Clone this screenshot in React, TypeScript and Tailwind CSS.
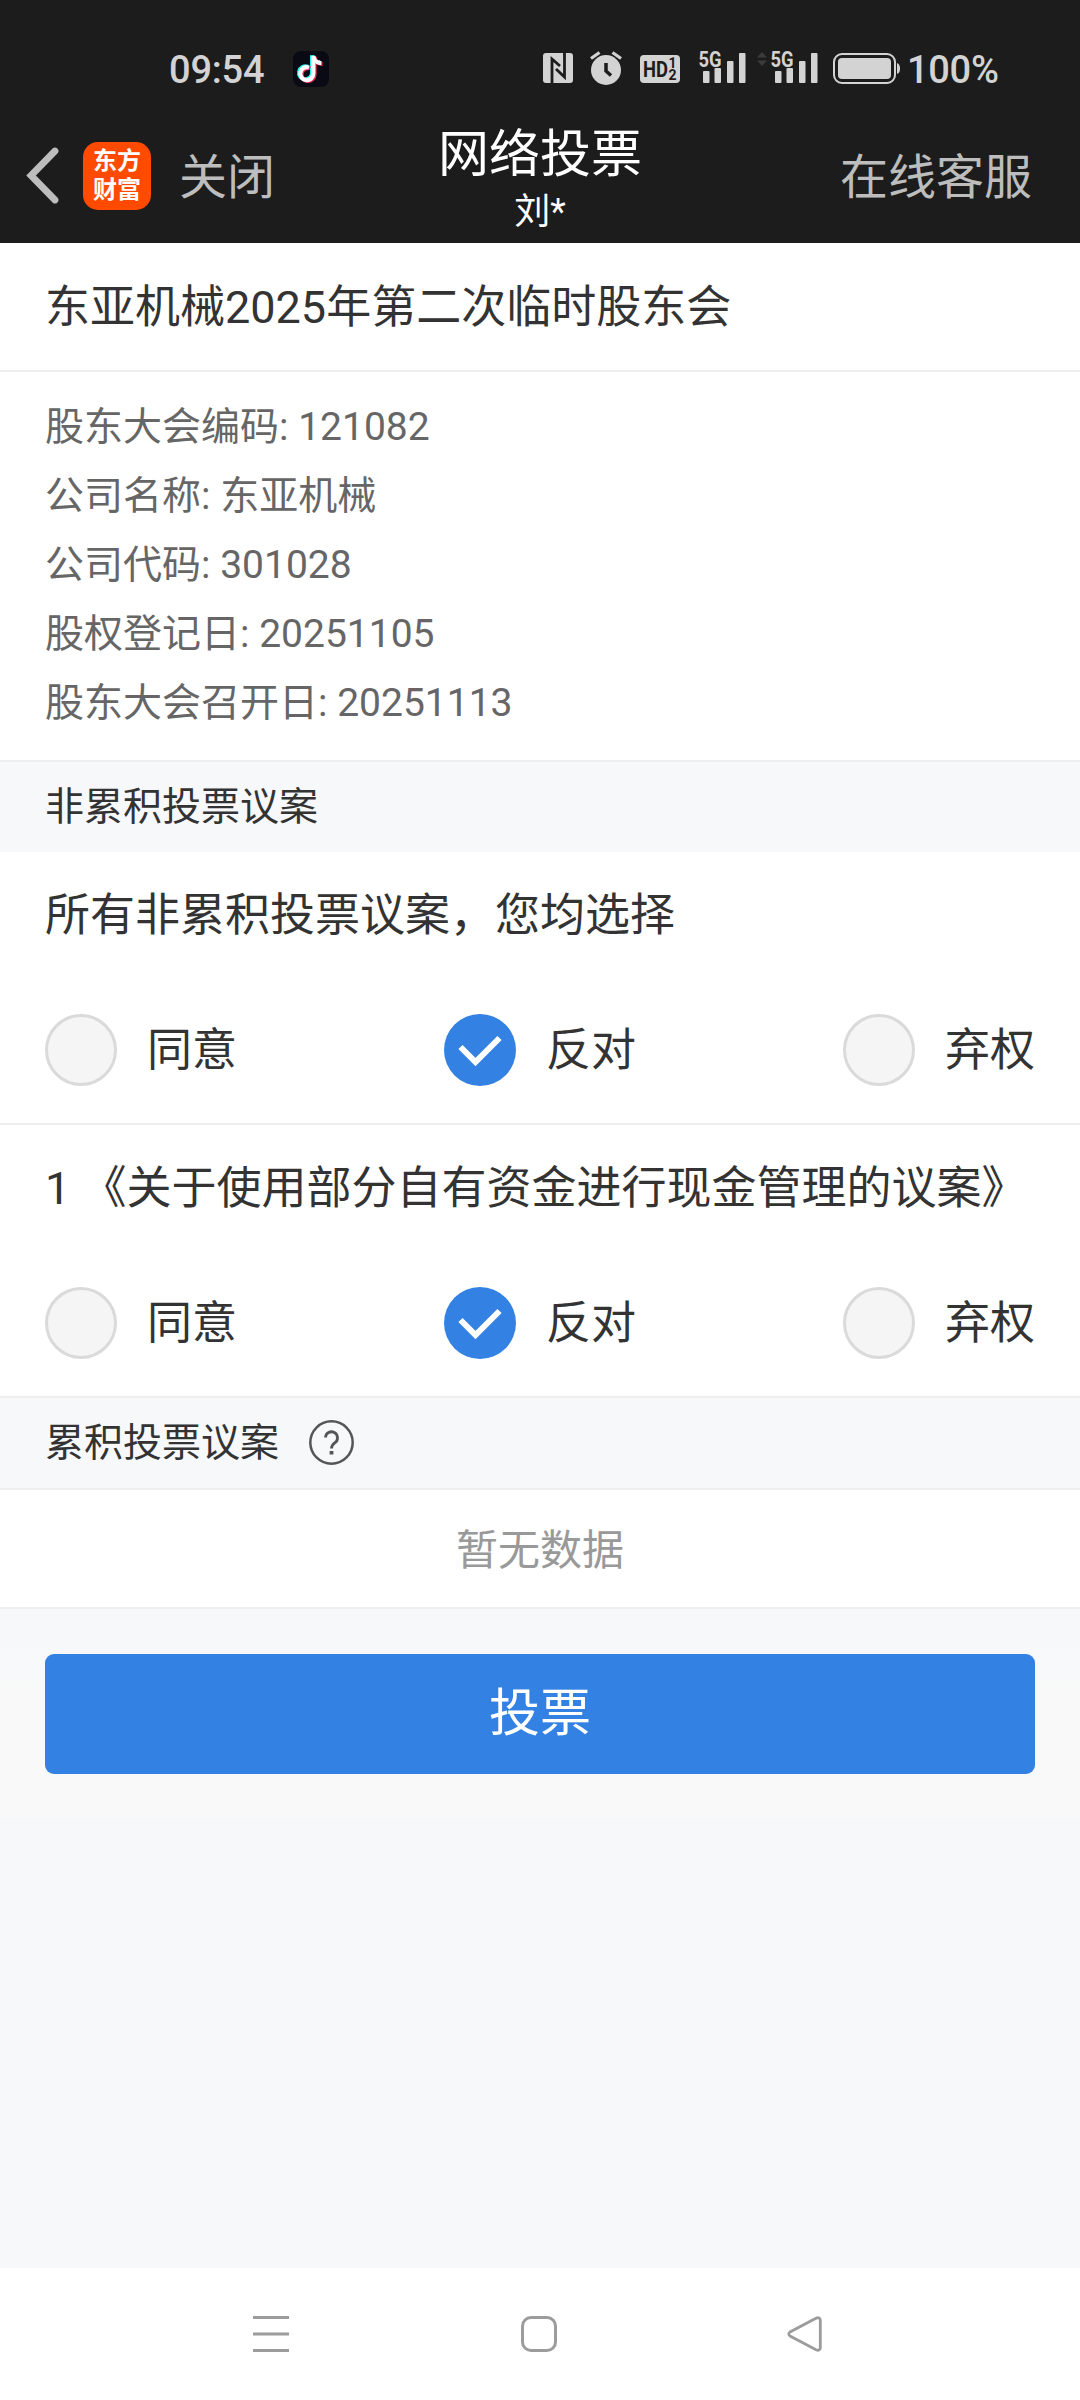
import { useState } from 'react'

type Choice = 'agree' | 'against' | 'abstain'

interface VoteOptionsProps {
  value: Choice
  onChange: (choice: Choice) => void
}

const options = [
  { key: 'agree' as const, label: '同意' },
  { key: 'against' as const, label: '反对' },
  { key: 'abstain' as const, label: '弃权' },
]

const details = [
  { label: '股东大会编码', value: '121082' },
  { label: '公司名称', value: '东亚机械' },
  { label: '公司代码', value: '301028' },
  { label: '股权登记日', value: '20251105' },
  { label: '股东大会召开日', value: '20251113' },
]

const VoteOptions: React.FC<VoteOptionsProps> = ({ value, onChange }) => {
  return (
    <div className="flex justify-between px-[45px]">
      {options.map((option) => (
        <button
          key={option.key}
          className="flex h-[72px] items-center gap-[30px] text-[45px] leading-[72px]"
          onClick={() => onChange(option.key)}
        >
          {value === option.key ? (
            <svg className="size-[72px]" viewBox="0 0 72 72" fill="none">
              <circle cx="36" cy="36" r="36" fill="#3381e3" />
              <path d="M16.5 33L31.5 48L55.5 24" stroke="#fff" strokeWidth="6" />
            </svg>
          ) : (
            <span className="size-[72px] rounded-full border-[3px] border-[#dadada] bg-[#f5f5f5]" />
          )}
          <span className="pt-[2px]">{option.label}</span>
        </button>
      ))}
    </div>
  )
}

const Signal = () => (
  <svg className="mt-px h-[36px] w-[47px] overflow-visible" viewBox="0 0 47 36" fill="#d3d3d3">
    <text
      x="-0.5"
      y="17"
      fontSize="22"
      fontWeight="700"
      fontFamily="Roboto"
      textLength="23"
      lengthAdjust="spacingAndGlyphs"
    >
      5G
    </text>
    <rect x="4" y="21" width="6.5" height="12" rx="1" />
    <rect x="15.5" y="18" width="6.5" height="15" rx="1" />
    <rect x="28" y="11" width="6.5" height="22" rx="1" />
    <rect x="40" y="3" width="6.5" height="30" rx="1" />
  </svg>
)

const StatusBar = () => (
  <div className="flex h-[138px] pt-[49px] text-[38px] leading-[42px] text-[#d3d3d3]">
    <span className="ml-[169px] w-[124px] font-medium tracking-[-0.2px]">09:54</span>
    <svg className="mt-[2px] size-[36px]" viewBox="0 0 36 36" fill="none">
      <rect width="36" height="36" rx="8" fill="#0a0a14" />
      <g strokeWidth="4.2">
        <path d="M16 16.5a6.5 6.5 0 1 0 4.3 6V5c.5 4 3.5 7 8 7.2" stroke="#25f4ee" transform="translate(-1.2 -.8)" />
        <path d="M16 16.5a6.5 6.5 0 1 0 4.3 6V5c.5 4 3.5 7 8 7.2" stroke="#fe2c55" transform="translate(1.2 .8)" />
        <path d="M16 16.5a6.5 6.5 0 1 0 4.3 6V5c.5 4 3.5 7 8 7.2" stroke="#fff" />
      </g>
    </svg>
    <svg className="mt-[4px] ml-[214px] size-[30px]" viewBox="0 0 30 30">
      <rect width="30" height="30" rx="3" fill="#d3d3d3" />
      <path d="M9 30V6l8 7M21.5 0v24L13 16" fill="none" stroke="#1c1c1c" strokeWidth="2.8" />
    </svg>
    <svg className="mt-[2px] ml-[17px] h-[34px] w-[32px]" viewBox="0 0 32 34" fill="none">
      <circle cx="16" cy="19" r="15" fill="#d3d3d3" />
      <path d="M1 7.5l8.5-6M31 7.5l-8.5-6" stroke="#d3d3d3" strokeWidth="3.2" />
      <path d="M16 12v8l5 4.5" stroke="#1c1c1c" strokeWidth="3.5" />
    </svg>
    <svg className="mt-[6px] ml-[18px] h-[28px] w-[40px]" viewBox="0 0 40 28" fontFamily="Roboto" fontWeight="700">
      <rect width="40" height="28" rx="4" fill="#d3d3d3" />
      <g fill="#1c1c1c">
        <text x="3" y="22" fontSize="22" textLength="25" lengthAdjust="spacingAndGlyphs">HD</text>
        <text x="28.5" y="13" fontSize="14">1</text>
        <text x="28.5" y="25" fontSize="14">2</text>
      </g>
    </svg>
    <div className="ml-[19px] flex">
      <Signal />
      <svg className="mt-[3px] mr-[4px] ml-[11px] h-[14px] w-[10px]" viewBox="0 0 10 14" fill="#3c3c3c">
        <path d="M0 5.5l5-5.5 5 5.5zM0 8.5l5 5.5 5-5.5z" />
      </svg>
      <Signal />
    </div>
    <svg className="mt-[4px] ml-[15px] h-[31px] w-[67px]" viewBox="0 0 67 31" fill="#d3d3d3">
      <rect x="1" y="1" width="61" height="29" rx="8" fill="none" stroke="#d3d3d3" strokeWidth="2" />
      <rect x="5" y="5" width="53" height="21" rx="4" />
      <path d="M64 10q3 1 3 5.5t-3 5.5z" />
    </svg>
    <span className="ml-[7px] font-medium tracking-[-0.3px]">100%</span>
  </div>
)

const NavBar = () => (
  <div className="flex h-[105px] text-[#bdbdbd]">
    <div className="flex w-[380px] pl-[26px]">
      <svg className="mt-[9px] h-[57px] w-[34px]" viewBox="0 0 34 57" fill="none">
        <path d="M29 4L5 28.5L29 53" stroke="currentColor" strokeWidth="6.8" strokeLinecap="round" />
      </svg>
      <div className="mt-[4px] ml-[23px] flex size-[68px] flex-col items-center justify-center rounded-[15px] bg-[#ff4a00] text-[24px] leading-[29px] font-bold text-white">
        <span>东方</span>
        <span>财富</span>
      </div>
      <span className="ml-[28px] pt-[4px] text-[48px] leading-[72px]">关闭</span>
    </div>
    <div className="flex w-[320px] flex-col items-center text-white">
      <h1 className="-mt-[13px] text-[51px] leading-[60px]">网络投票</h1>
      <span className="mt-[5px] text-[36px] leading-[44px]">刘*</span>
    </div>
    <span className="flex-1 pt-[4px] pr-[48px] text-right text-[48px] leading-[72px]">在线客服</span>
  </div>
)

export default function App() {
  const [allChoice, setAllChoice] = useState<Choice>('against')
  const [itemChoice, setItemChoice] = useState<Choice>('against')

  // Picking an option for all proposals applies it to each one
  const handleAllChange = (choice: Choice) => {
    setAllChoice(choice)
    setItemChoice(choice)
  }

  return (
    <div className="flex h-[2400px] w-[1080px] flex-col overflow-hidden bg-[#f7f8fa] font-[Roboto,'Noto_Sans_CJK_SC',sans-serif] text-[#333]">
      <header className="h-[243px] bg-[#1c1c1c]">
        <StatusBar />
        <NavBar />
      </header>

      <h2 className="h-[129px] border-b-2 border-[#eee] bg-white px-[45px] text-[45px] leading-[129px]">
        东亚机械2025年第二次临时股东会
      </h2>

      <div className="h-[390px] border-b-2 border-[#eee] bg-white px-[45px] pt-[21px] text-[39px] leading-[69px] text-[#666]">
        {details.map((item) => (
          <p key={item.label}>
            {item.label}: {item.value}
          </p>
        ))}
      </div>

      <h3 className="h-[90px] px-[45px] text-[39px] leading-[91px]">非累积投票议案</h3>

      <section className="h-[273px] border-b-2 border-[#eee] bg-white">
        <p className="h-[162px] px-[45px] text-[45px] leading-[128px]">所有非累积投票议案，您均选择</p>
        <VoteOptions value={allChoice} onChange={handleAllChange} />
      </section>

      <section className="h-[273px] border-b-2 border-[#eee] bg-white">
        <p className="h-[162px] px-[45px] text-[45px] leading-[128px] whitespace-pre">
          1 《关于使用部分自有资金进行现金管理的议案》
        </p>
        <VoteOptions value={itemChoice} onChange={setItemChoice} />
      </section>

      <div className="flex h-[92px] items-center border-b-2 border-[#eee] px-[45px] text-[39px] leading-[90px]">
        <span>累积投票议案</span>
        <svg className="mb-px ml-[30px] size-[45px]" viewBox="0 0 45 45" fill="none" stroke="#555" strokeWidth="2.5">
          <circle cx="22.5" cy="22.5" r="21.2" />
          <path d="M16.5 17.5a6 6 0 1 1 9.5 5.200c-2.5 1.8-3.5 3-3.5 5.800" strokeWidth="2.8" />
          <path d="M22.5 31v3.5" strokeWidth="3.8" />
        </svg>
      </div>

      <div className="h-[119px] border-b-2 border-[#eee] bg-white text-center text-[42px] leading-[121px] text-[#999]">
        暂无数据
      </div>

      <div className="h-[209px] bg-[#f9f9f9] bg-linear-to-b from-[#f7f8fa] to-[#f9f9f9] to-60% px-[45px] pt-[45px]">
        <button className="h-[120px] w-full rounded-[9px] bg-[#3381e3] text-[51px] leading-[120px] text-white">
          投票
        </button>
      </div>

      <footer className="mt-auto flex h-[132px] bg-white pt-[48px]">
        <svg className="ml-[253px] size-[36px]" viewBox="0 0 36 36" stroke="#9c9c9c" strokeWidth="3">
          <path d="M0 1.5h36M0 18h36M0 34.5h36" />
        </svg>
        <svg className="ml-[232px] size-[36px]" viewBox="0 0 36 36" fill="none" stroke="#9c9c9c" strokeWidth="3">
          <rect x="1.5" y="1.5" width="33" height="33" rx="8.5" />
        </svg>
        <svg className="ml-[230px] size-[36px]" viewBox="0 0 36 36" fill="none" stroke="#9c9c9c" strokeWidth="2.8">
          <path d="M29 2.200L3 16q-2.5 2 0 4L29 33.8q4 1.5 4.300-2V4.200q-.3-3.5-4.300-2z" />
        </svg>
      </footer>
    </div>
  )
}
